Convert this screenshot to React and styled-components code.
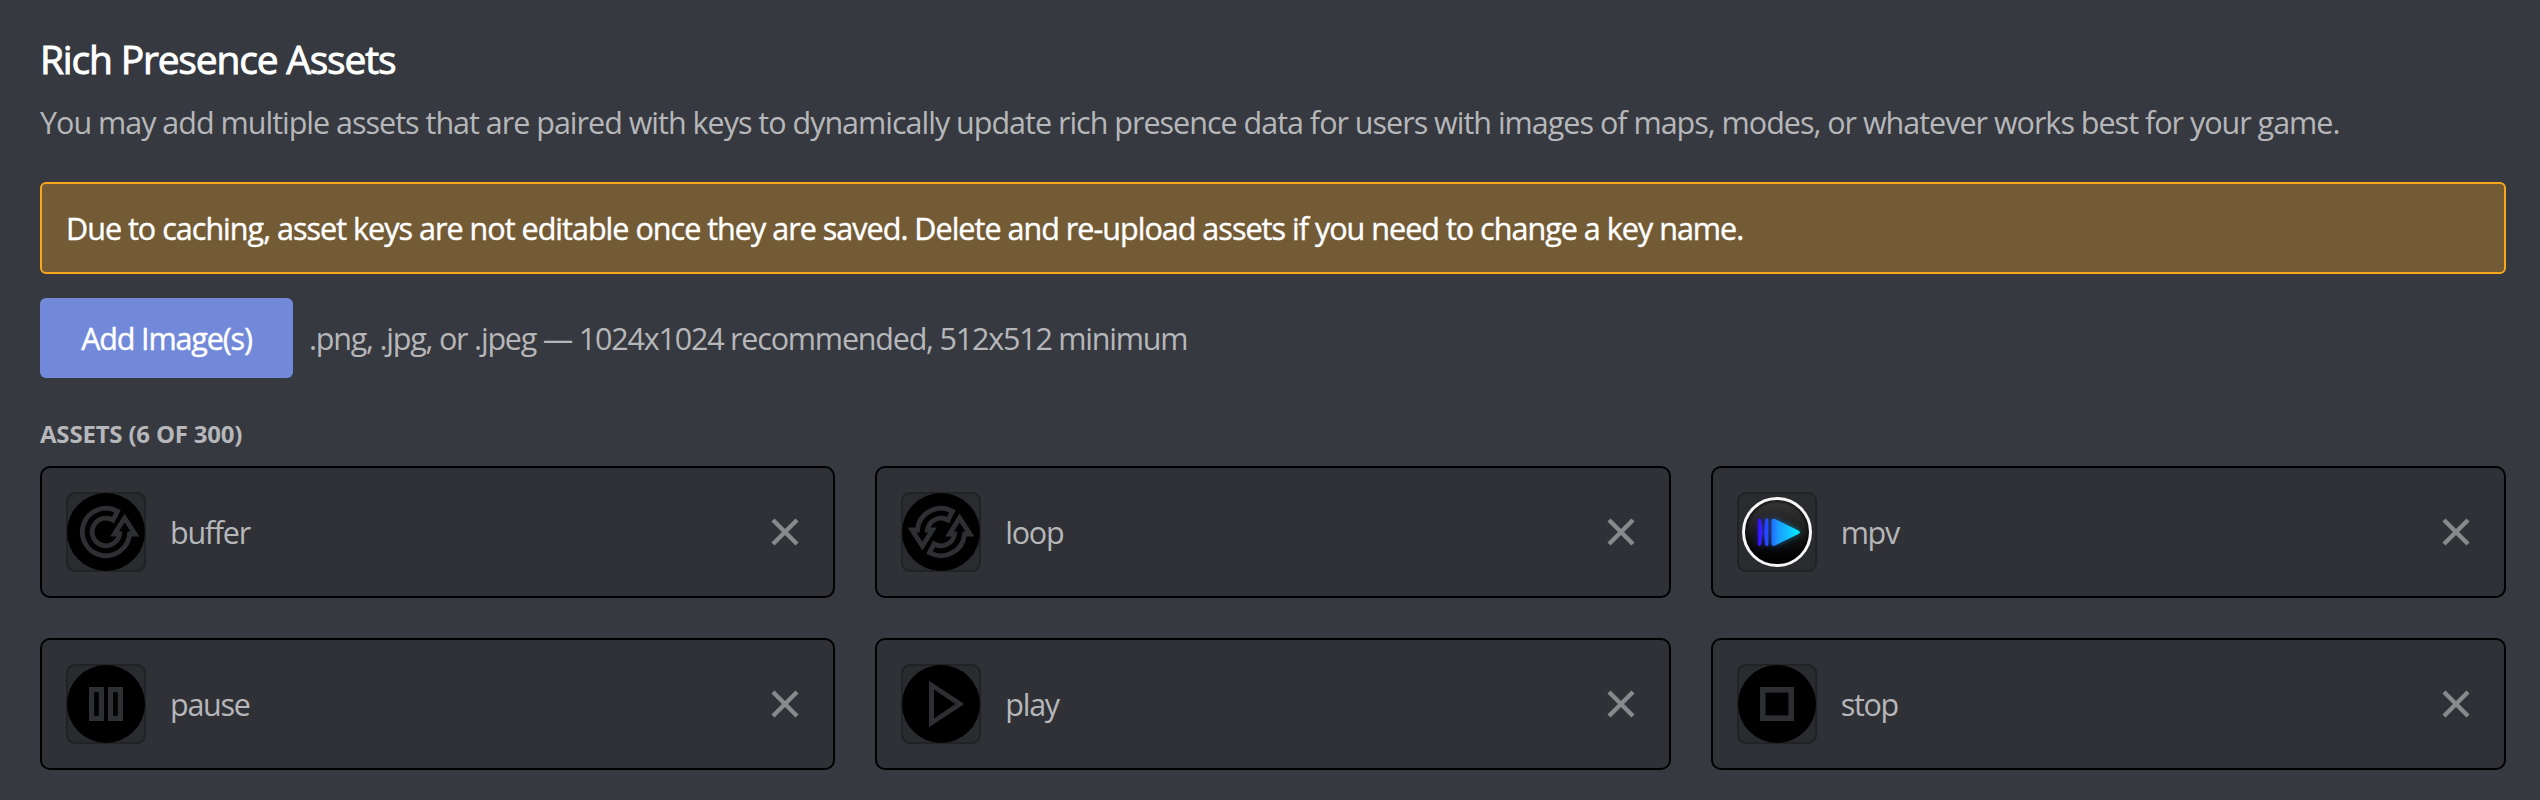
import React from "react";
import styled, { createGlobalStyle } from "styled-components";

const GlobalStyle = createGlobalStyle`
  * { box-sizing: border-box; }
  body { margin: 0; background: #36393f; }
`;

const Page = styled.main`
  min-height: 800px;
  padding: 35px 34px 30px 40px;
  background: #36393f;
  color: #b6b7ba;
  font-family: "Open Sans", "Noto Sans", sans-serif;
  font-size: 30.5px;
  letter-spacing: -1.006px;
  line-height: 40px;
  white-space: nowrap;
`;

const Title = styled.h1`
  margin: 0 0 19px;
  color: #fff;
  font-size: 39px;
  font-weight: 500;
  letter-spacing: -1.2px;
  line-height: 48px;
  -webkit-text-stroke: 0.9px currentColor;
`;

const Description = styled.p`
  margin: 0 0 40px;
`;

const Notice = styled.div`
  display: flex;
  align-items: center;
  height: 92px;
  margin-bottom: 24px;
  padding: 0 24px;
  border: 2px solid #faa61a;
  border-radius: 6px;
  background: #735b35;
  color: #fff;
  font-weight: 500;
  letter-spacing: -0.98px;
  -webkit-text-stroke: 0.4px currentColor;
`;

const UploadRow = styled.div`
  display: flex;
  align-items: center;
  gap: 16px;
  margin-bottom: 40px;
`;

const UploadButton = styled.button`
  width: 253px;
  height: 80px;
  padding: 0;
  border: 0;
  border-radius: 6px;
  background: #7289da;
  color: #fff;
  font: inherit;
  font-weight: 500;
  letter-spacing: -1.15px;
  -webkit-text-stroke: 0.4px currentColor;
`;

const Hint = styled.span`
  letter-spacing: -1.21px;
`;

const SectionLabel = styled.h2`
  margin: 0 0 16px;
  font-size: 24px;
  font-weight: 700;
  letter-spacing: -0.2px;
  line-height: 32px;
  text-transform: uppercase;
`;

const AssetGrid = styled.div`
  display: grid;
  grid-template-columns: repeat(3, 1fr);
  gap: 40px;
`;

const Card = styled.div`
  display: flex;
  align-items: center;
  height: 132px;
  padding: 0 24px;
  border: 2px solid #000;
  border-radius: 10px;
  background: #303136;
`;

const Thumb = styled.div`
  width: 80px;
  height: 80px;
  border-radius: 9px;
  background: #2a2b2f;
  box-shadow: inset 0 0 0 2px #202225;
`;

const Art = styled.svg`
  display: block;
  width: 80px;
  height: 80px;
`;

const Name = styled.span`
  flex: 1;
  margin-left: 24px;
  letter-spacing: -1.27px;
`;

const Remove = styled.button`
  width: 48px;
  height: 48px;
  padding: 0;
  border: 0;
  background: none;
  color: #88898c;
`;

const Cross = styled.svg`
  display: block;
  width: 48px;
  height: 48px;
`;

const ink = "#2e2f33";
const halfLoop =
  "M51.5 19.3A23.7 23.7 0 0 0 16.4 38L11 38L21.4 54L31.5 38L26.4 38A13.8 13.8 0 0 1 47 28.1Z";

const glyphs = {
  buffer: (
    <path
      d="M51.5 19.3A23.7 23.7 0 1 0 63.6 42L69 42L58.6 26L48.5 42L53.6 42A13.8 13.8 0 1 1 47 28.1Z"
      fill="none"
      stroke={ink}
      strokeWidth="4.8"
    />
  ),
  loop: (
    <g fill="none" stroke={ink} strokeWidth="4.8">
      <path d={halfLoop} />
      <path d={halfLoop} transform="rotate(180 40 40)" />
    </g>
  ),
  pause: (
    <g fill="none" stroke={ink} strokeWidth="5.2">
      <rect x="25.6" y="25.6" width="9.8" height="28.8" />
      <rect x="44.6" y="25.6" width="9.8" height="28.8" />
    </g>
  ),
  play: (
    <path
      d="M28 16.7L63.3 40L28 63.3ZM33 25.6V54.4L54.5 40Z"
      fill={ink}
      fillRule="evenodd"
    />
  ),
  stop: (
    <rect x="25.8" y="25.8" width="28.4" height="28.4" fill="none" stroke={ink} strokeWidth="5.6" />
  ),
};

const playerShape = (
  <>
    <path d="M20.9 28Q20.9 26.6 22.3 26.6Q23.9 26.6 24.2 28.4L25.4 38.5Q25.6 40.3 25.4 42L24.2 52.2Q23.9 54 22.3 54Q20.9 54 20.9 52.6Z" />
    <path d="M28 28Q28.3 26.6 29.8 26.6Q31.4 26.6 31.4 28.2V52.4Q31.4 54 29.8 54Q28.3 54 28 52.6L26.9 42Q26.7 40.3 26.9 38.5Z" />
    <path d="M34.4 29Q34.4 25.8 38 27L61.3 38.4Q64.3 40.2 61.3 42L38 53.6Q34.4 54.8 34.4 51.6Z" />
  </>
);

function PlayerLogo() {
  return (
    <>
      <defs>
        <linearGradient id="disc" x1="0" y1="0" x2="0" y2="1">
          <stop offset="0" stopColor="#383838" />
          <stop offset="0.45" stopColor="#1d1d1f" />
          <stop offset="0.85" stopColor="#020202" />
        </linearGradient>
        <radialGradient id="edge">
          <stop offset="0.85" stopColor="#000" stopOpacity="0" />
          <stop offset="1" stopColor="#000" stopOpacity="0.7" />
        </radialGradient>
        <linearGradient id="hue" gradientUnits="userSpaceOnUse" x1="20" y1="0" x2="63" y2="0">
          <stop offset="0" stopColor="#3b06ff" />
          <stop offset="0.25" stopColor="#2250ff" />
          <stop offset="0.5" stopColor="#1c9cff" />
          <stop offset="1" stopColor="#00f0ff" />
        </linearGradient>
        <filter id="glow" x="-50%" y="-50%" width="200%" height="200%">
          <feGaussianBlur stdDeviation="3.2" />
        </filter>
      </defs>
      <circle cx="40" cy="40" r="33.5" fill="url(#disc)" />
      <circle cx="40" cy="40" r="33" fill="url(#edge)" />
      <g fill="url(#hue)" filter="url(#glow)" opacity="0.5">{playerShape}</g>
      <g fill="url(#hue)">{playerShape}</g>
      <circle cx="40" cy="40" r="33.5" fill="none" stroke="#f6f6f6" strokeWidth="3" />
    </>
  );
}

function AssetArt({ kind }) {
  return (
    <Art viewBox="0 0 80 80">
      {kind === "mpv" ? (
        <PlayerLogo />
      ) : (
        <>
          <circle cx="40" cy="40" r="39" fill="#000" />
          {glyphs[kind]}
        </>
      )}
    </Art>
  );
}

const assets = ["buffer", "loop", "mpv", "pause", "play", "stop"];

export default function App() {
  return (
    <Page>
      <GlobalStyle />
      <Title>Rich Presence Assets</Title>
      <Description>
        You may add multiple assets that are paired with keys to dynamically update rich presence
        data for users with images of maps, modes, or whatever works best for your game.
      </Description>
      <Notice>
        Due to caching, asset keys are not editable once they are saved. Delete and re-upload
        assets if you need to change a key name.
      </Notice>
      <UploadRow>
        <UploadButton>Add Image(s)</UploadButton>
        <Hint>.png, .jpg, or .jpeg — 1024x1024 recommended, 512x512 minimum</Hint>
      </UploadRow>
      <SectionLabel>Assets (6 of 300)</SectionLabel>
      <AssetGrid>
        {assets.map((name) => (
          <Card key={name}>
            <Thumb>
              <AssetArt kind={name} />
            </Thumb>
            <Name>{name}</Name>
            <Remove aria-label={`Delete ${name}`}>
              <Cross viewBox="0 0 48 48" fill="none" stroke="currentColor" strokeWidth="4.4">
                <path d="M12 12L36 36M36 12L12 36" />
              </Cross>
            </Remove>
          </Card>
        ))}
      </AssetGrid>
    </Page>
  );
}
